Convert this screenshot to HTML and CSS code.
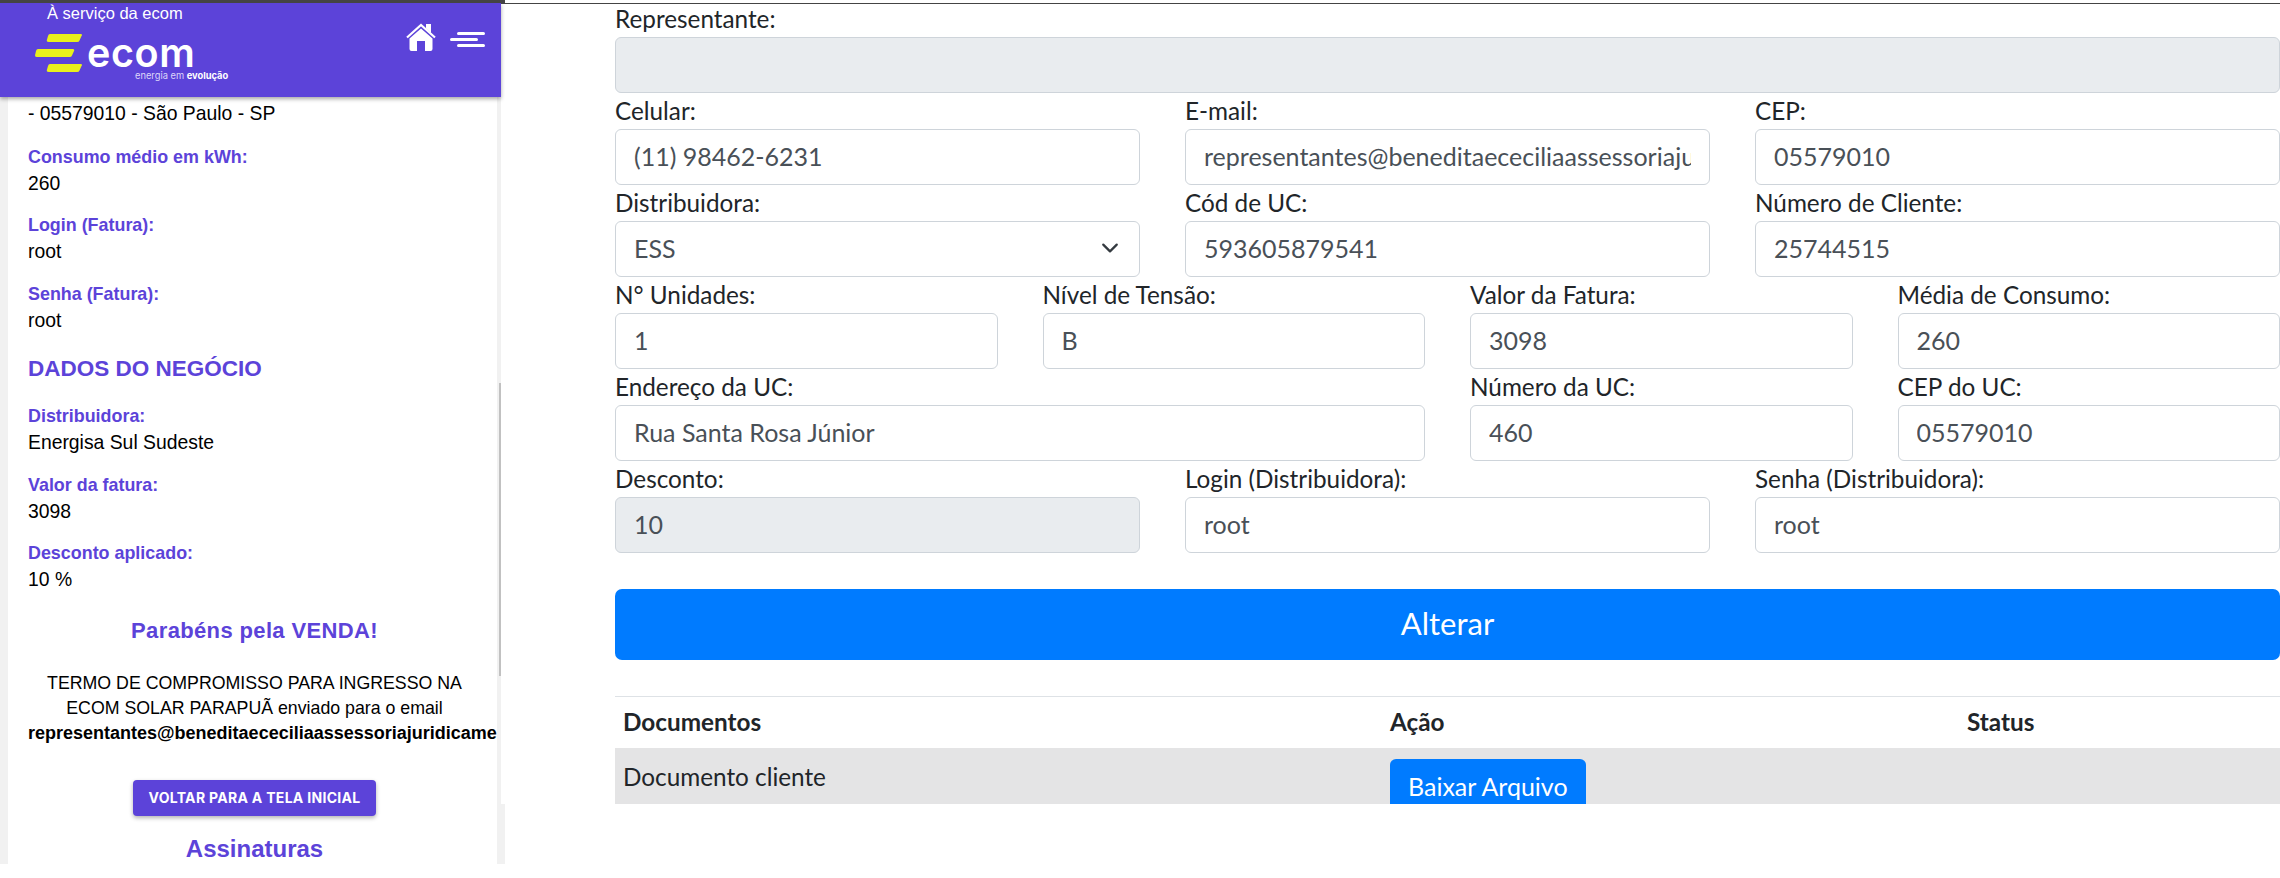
FILE: index.html
```html
<!DOCTYPE html>
<html lang="pt-BR">
<head>
<meta charset="utf-8">
<title>Ecom</title>
<link rel="stylesheet" href="styles.css">
</head>
<body>
<div class="app">
  <aside class="side">
    <header class="top">
      <div class="brand">
        <div class="slogan">À serviço da ecom</div>
        <div class="logo">
          <svg class="bars" width="48" height="38" viewBox="0 0 48 38"><g fill="#e9f01c"><path d="M15 0H45.500Q48 0 46.500 2L44.500 6.500Q44 8 42 8H14Q11 8 12 5.500L13 2Q13.500 0 15 0Z"/><path d="M3 15H37.500Q40 15 39 17L37 21.500Q36.500 23 34.500 23H2Q-.500 23 .200 20.500L1 17Q1.500 15 3 15Z"/><path d="M15 30H45.500Q48 30 46.500 32L44.500 36.500Q44 38 42 38H14Q11 38 12 35.500L13 32Q13.500 30 15 30Z"/></g></svg>
          <div class="word"><span class="ecom">ecom</span><span class="tag">energia em <b>evolução</b></span></div>
        </div>
      </div>
      <div class="icons">
        <svg width="30" height="28" viewBox="0 0 30 28"><path d="M1 14.500L15 2 29 14.500" fill="none" stroke="#fff" stroke-width="2.200"/><path d="M20 1H25V10L20 5.500ZM3.500 15.500L15 5.500 26.500 15.500V26Q26.500 28 24.500 28H19V18H11V28H5.500Q3.500 28 3.500 26Z" fill="#fff"/></svg>
        <svg class="burger" width="35" height="15" viewBox="0 0 35 15"><path d="M8.500 1.500H33.500M1.500 7.500H26.500M8.500 13.500H33.500" stroke="#fff" stroke-width="3" stroke-linecap="round"/></svg>
      </div>
    </header>
    <div class="card">
      <p class="val first">- 05579010 - São Paulo - SP</p>
      <h4>Consumo médio em kWh:</h4><p class="val">260</p>
      <h4>Login (Fatura):</h4><p class="val">root</p>
      <h4>Senha (Fatura):</h4><p class="val">root</p>
      <h3>DADOS DO NEGÓCIO</h3>
      <h4>Distribuidora:</h4><p class="val">Energisa Sul Sudeste</p>
      <h4>Valor da fatura:</h4><p class="val">3098</p>
      <h4>Desconto aplicado:</h4><p class="val">10 %</p>
      <h2>Parabéns pela VENDA!</h2>
      <p class="term">TERMO DE COMPROMISSO PARA INGRESSO NA ECOM SOLAR PARAPUÃ enviado para o email <b>representantes@beneditaececiliaassessoriajuridicamente.com.br</b></p>
      <a class="back">VOLTAR PARA A TELA INICIAL</a>
      <h2 class="sign">Assinaturas</h2>
    </div>
    <div class="thumb"></div>
  </aside>
  <main class="main">
    <div class="form">
      <div class="row c1">
        <label class="f lead"><span>Representante:</span><input class="in" disabled></label>
      </div>
      <div class="row c3">
        <label class="f"><span>Celular:</span><input class="in" value="(11) 98462-6231"></label>
        <label class="f"><span>E-mail:</span><input class="in" value="representantes@beneditaececiliaassessoriajuridicamente.com.br"></label>
        <label class="f"><span>CEP:</span><input class="in" value="05579010"></label>
      </div>
      <div class="row c3">
        <label class="f"><span>Distribuidora:</span>
          <div class="in sel">ESS<svg width="18" height="18" viewBox="0 0 16 16"><path d="M2 5l6 6 6-6" fill="none" stroke="#343a40" stroke-width="2" stroke-linecap="round" stroke-linejoin="round"/></svg></div></label>
        <label class="f"><span>Cód de UC:</span><input class="in" value="593605879541"></label>
        <label class="f"><span>Número de Cliente:</span><input class="in" value="25744515"></label>
      </div>
      <div class="row c4">
        <label class="f"><span>N° Unidades:</span><input class="in" value="1"></label>
        <label class="f"><span>Nível de Tensão:</span><input class="in" value="B"></label>
        <label class="f"><span>Valor da Fatura:</span><input class="in" value="3098"></label>
        <label class="f"><span>Média de Consumo:</span><input class="in" value="260"></label>
      </div>
      <div class="row c4">
        <label class="f s2"><span>Endereço da UC:</span><input class="in" value="Rua Santa Rosa Júnior"></label>
        <label class="f"><span>Número da UC:</span><input class="in" value="460"></label>
        <label class="f"><span>CEP do UC:</span><input class="in" value="05579010"></label>
      </div>
      <div class="row c3">
        <label class="f"><span>Desconto:</span><input class="in" value="10" disabled></label>
        <label class="f"><span>Login (Distribuidora):</span><input class="in" value="root"></label>
        <label class="f"><span>Senha (Distribuidora):</span><input class="in" value="root"></label>
      </div>
      <button class="alter">Alterar</button>
      <table class="docs">
        <colgroup><col class="c-a"><col class="c-b"><col></colgroup>
        <thead><tr><th>Documentos</th><th>Ação</th><th>Status</th></tr></thead>
        <tbody><tr><td>Documento cliente</td><td><button class="dl">Baixar Arquivo</button></td><td></td></tr></tbody>
      </table>
    </div>
  </main>
</div>
</body>
</html>
```
FILE: styles.css
```css
* { box-sizing: border-box; }
html, body { margin: 0; height: 100%; background: #fff; overflow: hidden; }
body { font-family: "Lato", "Liberation Sans", sans-serif; }
.app { display: flex; align-items: flex-start; height: 864px; }
.side { position: relative; width: 505px; height: 864px; flex: none; background: #f1f1f1; overflow: hidden; border-top: 3px solid #444; font-family: "Liberation Sans", Arial, sans-serif; }
.top { width: 501px; height: 94px; background: #5c43d9; box-shadow: 0 2px 4px rgba(0,0,0,.35); position: relative; z-index: 2; display: flex; justify-content: space-between; color: #fff; }
.brand { padding-left: 35px; }
.slogan { font-size: 16.500px; line-height: 18px; margin-left: 12px; padding-top: 1px; }
.logo { display: flex; gap: 4px; margin-top: 12px; }
.word { display: flex; flex-direction: column; margin-top: 1px; }
.ecom { font: 600 39.500px/36px "Inter", sans-serif; letter-spacing: .6px; }
.tag { font: 400 9.300px/10px "Inter", sans-serif; margin-left: 48px; white-space: nowrap; color: #dcd6fa; }
.tag b { font-weight: 700; color: #fff; }
.icons { display: flex; align-items: flex-start; gap: 14px; padding: 20px 16px 0 0; }
.burger { margin-top: 9px; }
.card { margin-left: 8px; width: 489px; padding: 0 16px 0 20px; background: #fff; height: 767px; overflow: hidden; }
.val { margin: 0; font-size: 19.350px; line-height: 27.500px; color: #000; }
.val.first { padding-top: 3px; padding-bottom: 1px; }
h4 { margin: 15px 0 0; font-size: 17.900px; line-height: 26px; font-weight: 700; color: #5c43d9; }
h3 { margin: 20px 0 0; font-size: 22.500px; line-height: 30px; font-weight: 700; color: #5c43d9; }
h3 + h4 { margin-top: 19px; }
h2 { margin: 22px 0 0; font-size: 22px; line-height: 30px; font-weight: 700; color: #5c43d9; text-align: center; letter-spacing: .36px; }
.term { margin: 25px 0 0; font-size: 17.750px; line-height: 25px; text-align: center; color: #000; }
.term b { display: block; white-space: nowrap; text-align: left; font-size: 18px; }
.back { display: block; width: 243px; height: 36px; margin: 34px 0 0 105px; border-radius: 4px; background: #5c43d9; box-shadow: 0 2px 4px rgba(0,0,0,.3); color: #fff; font: 700 14px/36px "Inter", sans-serif; letter-spacing: .3px; text-align: center; }
.sign { margin-top: 18px; font-size: 24px; letter-spacing: 0; }
.thumb { position: absolute; right: 4px; top: 380px; width: 2px; height: 293px; background: #c1c1c1; }
.main { flex: 1; min-width: 0; position: relative; margin: 3px 0 0 -4px; height: 801px; overflow: hidden; padding: 0 0 0 114px; border-top: 1px solid #444; background: #fff; color: #212529; }
.form { width: 1665px; }
.row { display: grid; gap: 45px; }
.c1 { grid-template-columns: 1fr; }
.c3 { grid-template-columns: repeat(3, 1fr); }
.c4 { grid-template-columns: repeat(4, 1fr); }
.s2 { grid-column: span 2; }
.f { display: block; min-width: 0; }
.f span { display: block; font-size: 24.300px; line-height: 36px; }
.f.lead span { line-height: 30px; margin-bottom: 3px; }
.in { display: block; width: 100%; height: 56px; padding: 8px 18px 10px; border: 1px solid #ced4da; border-radius: 6px; font: 25px/36px "Lato", sans-serif; color: #495057; background: #fff; outline: none; }
.in:disabled { background: #e9ecef; }
.sel { display: flex; align-items: center; justify-content: space-between; padding-right: 20px; }
.alter { display: block; width: 100%; height: 71px; margin-top: 36px; padding-bottom: 3px; border: 0; border-radius: 7px; background: #007bff; color: #fff; font: 31px/45px "Lato", sans-serif; }
.docs { width: 100%; margin-top: 36px; border-collapse: collapse; table-layout: fixed; font-size: 24.300px; line-height: 36px; }
.c-a { width: 767px; }
.c-b { width: 577px; }
.docs th { text-align: left; font-weight: 700; padding: 7px 8px 8px; border-top: 1px solid #dee2e6; }
.docs td { padding: 11px 8px; vertical-align: top; background: #e4e4e5; }
.dl { display: block; height: 56px; padding: 8px 18px 10px; border: 0; border-radius: 6px; background: #007bff; color: #fff; font: 25px/36px "Lato", sans-serif; white-space: nowrap; }
```
